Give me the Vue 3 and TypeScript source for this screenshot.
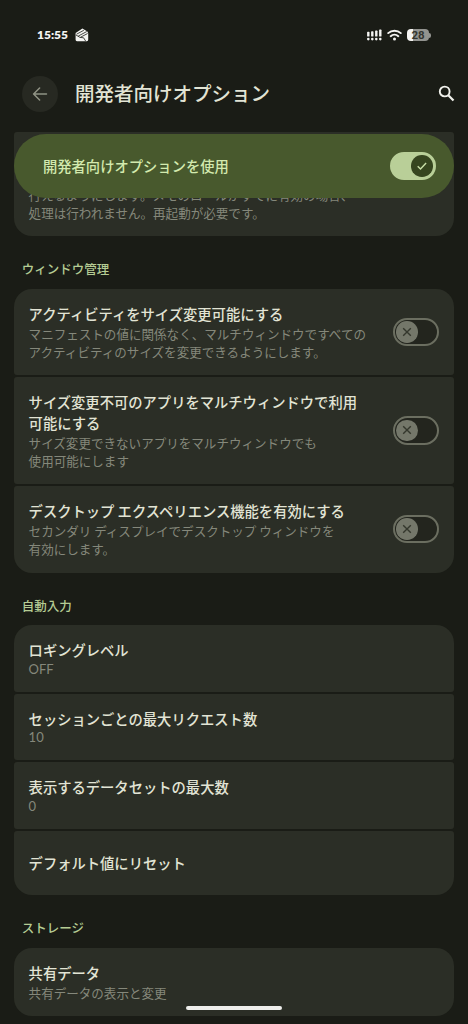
<script setup lang="ts">
interface Item {
  title: string[]
  desc?: string[]
  latin?: boolean
  toggle?: boolean
}
interface Section {
  heading: string
  items: Item[]
}

const sections: Section[] = [
  {
    heading: 'ウィンドウ管理',
    items: [
      {
        title: ['アクティビティをサイズ変更可能にする'],
        desc: ['マニフェストの値に関係なく、マルチウィンドウですべての', 'アクティビティのサイズを変更できるようにします。'],
        toggle: true,
      },
      {
        title: ['サイズ変更不可のアプリをマルチウィンドウで利用', '可能にする'],
        desc: ['サイズ変更できないアプリをマルチウィンドウでも', '使用可能にします'],
        toggle: true,
      },
      {
        title: ['デスクトップ エクスペリエンス機能を有効にする'],
        desc: ['セカンダリ ディスプレイでデスクトップ ウィンドウを', '有効にします。'],
        toggle: true,
      },
    ],
  },
  {
    heading: '自動入力',
    items: [
      { title: ['ロギングレベル'], desc: ['OFF'], latin: true },
      { title: ['セッションごとの最大リクエスト数'], desc: ['10'], latin: true },
      { title: ['表示するデータセットの最大数'], desc: ['0'], latin: true },
      { title: ['デフォルト値にリセット'] },
    ],
  },
  {
    heading: 'ストレージ',
    items: [{ title: ['共有データ'], desc: ['共有データの表示と変更'] }],
  },
]
</script>

<template>
  <div class="screen">
    <div class="status">
      <span class="time">15:55</span>
      <svg class="notif" width="14" height="14" viewBox="0 0 14 14">
        <path d="M.6 5 7.400.6l5 2.800.8 1.800v6.600q0 1.400-1.400 1.400H2Q.6 13.200.6 11.800Z" fill="#f4f4f2" />
        <path d="M1.600 6.200 8.800 2.300M3.200 8.100 11.800 3.500M5.600 9.200l7-3.700M1 7l4 2.400 3.600.4 2 3.200" stroke="#1a1c16" stroke-width=".8" fill="none" />
      </svg>
      <span class="spacer"></span>
      <svg class="signal" width="16" height="12" viewBox="0 0 16 12">
        <g fill="#f4f4f2">
          <rect x=".1" y="2.800" width="2.400" height="4.800" rx=".7" />
          <rect x="4.100" y="2.200" width="2.400" height="5.400" rx=".7" />
          <rect x="8.100" y="1.500" width="2.400" height="6.100" rx=".7" />
          <rect x="12.100" y=".5" width="2.400" height="7.100" rx=".7" />
          <circle cx="1.300" cy="10.100" r="1.300" /><circle cx="5.300" cy="10.100" r="1.300" />
          <circle cx="9.300" cy="10.100" r="1.300" /><circle cx="13.300" cy="10.100" r="1.300" />
        </g>
      </svg>
      <svg class="wifi" width="15" height="12" viewBox="0 0 15 12">
        <path d="M1.200 4.100a9.400 9.400 0 0 1 12.600 0M3.700 7.200a5.600 5.600 0 0 1 7.600 0" stroke="#f4f4f2" stroke-width="1.900" fill="none" stroke-linecap="round" />
        <circle cx="7.500" cy="10.100" r="1.500" fill="#f4f4f2" />
      </svg>
      <span class="battery">28</span>
      <span class="nub"></span>
    </div>

    <header class="bar">
      <span class="back">
        <svg width="16" height="14" viewBox="0 0 16 14">
          <path d="M14.500 7H1.800M7.600 1 1.600 7l6 6" stroke="#8f9284" stroke-width="1.500" fill="none" stroke-linecap="round" stroke-linejoin="round" />
        </svg>
      </span>
      <h1>開発者向けオプション</h1>
      <svg class="search" width="17" height="17" viewBox="0 0 17 17">
        <circle cx="6.700" cy="6.500" r="4.900" stroke="#f1f1ec" stroke-width="1.900" fill="none" />
        <path d="m10.300 10.200 5.200 5.300" stroke="#f1f1ec" stroke-width="2.200" />
      </svg>
    </header>

    <main>
      <div class="top">
        <div class="card tail">
          <p class="desc">行えるようにします。メモのロールがすでに有効の場合、</p>
          <p class="desc">処理は行われません。再起動が必要です。</p>
        </div>
        <div class="banner">
          <span>開発者向けオプションを使用</span>
          <span class="switch on">
            <span class="knob">
              <svg width="12" height="12" viewBox="0 0 12 12"><path d="m1.700 6.300 2.800 2.700 5.600-6" /></svg>
            </span>
          </span>
        </div>
      </div>

      <section v-for="s in sections" :key="s.heading">
        <h2>{{ s.heading }}</h2>
        <div class="group">
          <div v-for="item in s.items" :key="item.title[0]" class="card" :class="{ single: !item.desc }">
            <div class="text">
              <p v-for="line in item.title" :key="line" class="title">{{ line }}</p>
              <p v-for="line in item.desc" :key="line" class="desc" :class="{ latin: item.latin }">{{ line }}</p>
            </div>
            <span v-if="item.toggle" class="switch">
              <span class="knob">
                <svg width="12" height="12" viewBox="0 0 12 12"><path d="m2.200 2.200 7.600 7.600M9.800 2.200 2.200 9.800" /></svg>
              </span>
            </span>
          </div>
        </div>
      </section>
    </main>
    <div class="handle"></div>
  </div>
</template>

<style>
body {
  background: #1a1c16;
}
</style>

<style scoped>
* {
  box-sizing: border-box;
  margin: 0;
}
.screen {
  position: relative;
  width: 468px;
  height: 1024px;
  overflow: hidden;
  background: #1a1c16;
  font-family: 'Noto Sans CJK JP', sans-serif;
  white-space: nowrap;
}
.status {
  display: flex;
  align-items: center;
  height: 70px;
  padding: 0 37px;
}
.time {
  color: #f4f4f2;
  font: 800 12px/14px Lato, sans-serif;
  width: 38px;
}
.spacer {
  flex: 1;
}
.signal {
  margin-right: 4.500px;
}
.wifi {
  margin-right: 5px;
}
.battery {
  width: 22px;
  height: 12.500px;
  border-radius: 4px;
  background: linear-gradient(90deg, #f4f4f2 28%, #92938f 28%);
  color: #343630;
  font: 700 11.500px/12.500px Roboto, sans-serif;
  text-align: center;
}
.nub {
  width: 2px;
  height: 5px;
  border-radius: 0 2px 2px 0;
  background: #92938f;
}
.bar {
  display: flex;
  align-items: center;
  height: 48px;
  padding: 0 13px 0 21.500px;
}
.back {
  display: flex;
  align-items: center;
  justify-content: center;
  width: 36px;
  height: 36px;
  border-radius: 50%;
  background: #272922;
}
h1 {
  flex: 1;
  margin-left: 17.500px;
  padding-bottom: 2px;
  color: #e2e4d5;
  font-size: 19.500px;
  font-weight: 500;
  line-height: 28px;
}
.search {
  margin-bottom: 1.500px;
}
main {
  padding: 14px 14.300px 0;
}
.top {
  position: relative;
}
.card {
  display: flex;
  align-items: center;
  justify-content: space-between;
  padding: 13.900px 14.300px 14.600px;
  border-radius: 3px;
  background: #2b2e26;
}
.tail {
  flex-direction: column;
  align-items: flex-start;
  justify-content: flex-end;
  height: 104.400px;
  border-radius: 3px 3px 18px 18px;
}
.banner {
  position: absolute;
  top: 1.500px;
  left: 0;
  right: 0;
  height: 64.500px;
  display: flex;
  align-items: center;
  justify-content: space-between;
  padding: 0 17.700px 0 28.700px;
  border-radius: 33px;
  background: #48592d;
  color: #d3eaae;
  font-size: 14.300px;
  font-weight: 500;
}
h2 {
  margin-left: 7.500px;
  padding-top: 24px;
  height: 52.700px;
  color: #b5cc94;
  font-size: 12.500px;
  font-weight: 500;
  line-height: 18px;
}
.group {
  display: flex;
  flex-direction: column;
  gap: 2px;
}
.group .card:first-child {
  border-top-left-radius: 18px;
  border-top-right-radius: 18px;
}
.group .card:last-child {
  border-bottom-left-radius: 18px;
  border-bottom-right-radius: 18px;
}
.group .single {
  height: 64.700px;
  padding-bottom: 15.200px;
}
.title {
  color: #e2e4d5;
  font-size: 14.300px;
  font-weight: 500;
  line-height: 21px;
}
.desc {
  color: #85887b;
  font-size: 12.550px;
  line-height: 18px;
}
.title + .desc {
  margin-top: 0.700px;
}
.latin {
  font-family: Lato, sans-serif;
  font-size: 13px;
  line-height: 16.300px;
}
.switch {
  display: flex;
  align-items: center;
  width: 46.500px;
  height: 28.500px;
  padding-left: 1.500px;
  border: 2px solid #6b6e60;
  border-radius: 15px;
  background: #23251e;
}
.knob {
  display: flex;
  align-items: center;
  justify-content: center;
  width: 21.500px;
  height: 21.500px;
  border-radius: 50%;
  background: #74776a;
}
.knob path {
  fill: none;
  stroke: #34372d;
  stroke-width: 1.400;
}
.on {
  justify-content: flex-end;
  padding: 0 1.500px 0 0;
  border-color: #b9cf98;
  background: #b9cf98;
}
.on .knob {
  background: #36451f;
}
.on .knob path {
  stroke: #c9dfa8;
}
.handle {
  position: absolute;
  left: 186px;
  top: 1006px;
  width: 96px;
  height: 3.700px;
  border-radius: 2px;
  background: #eeeeec;
}
</style>
